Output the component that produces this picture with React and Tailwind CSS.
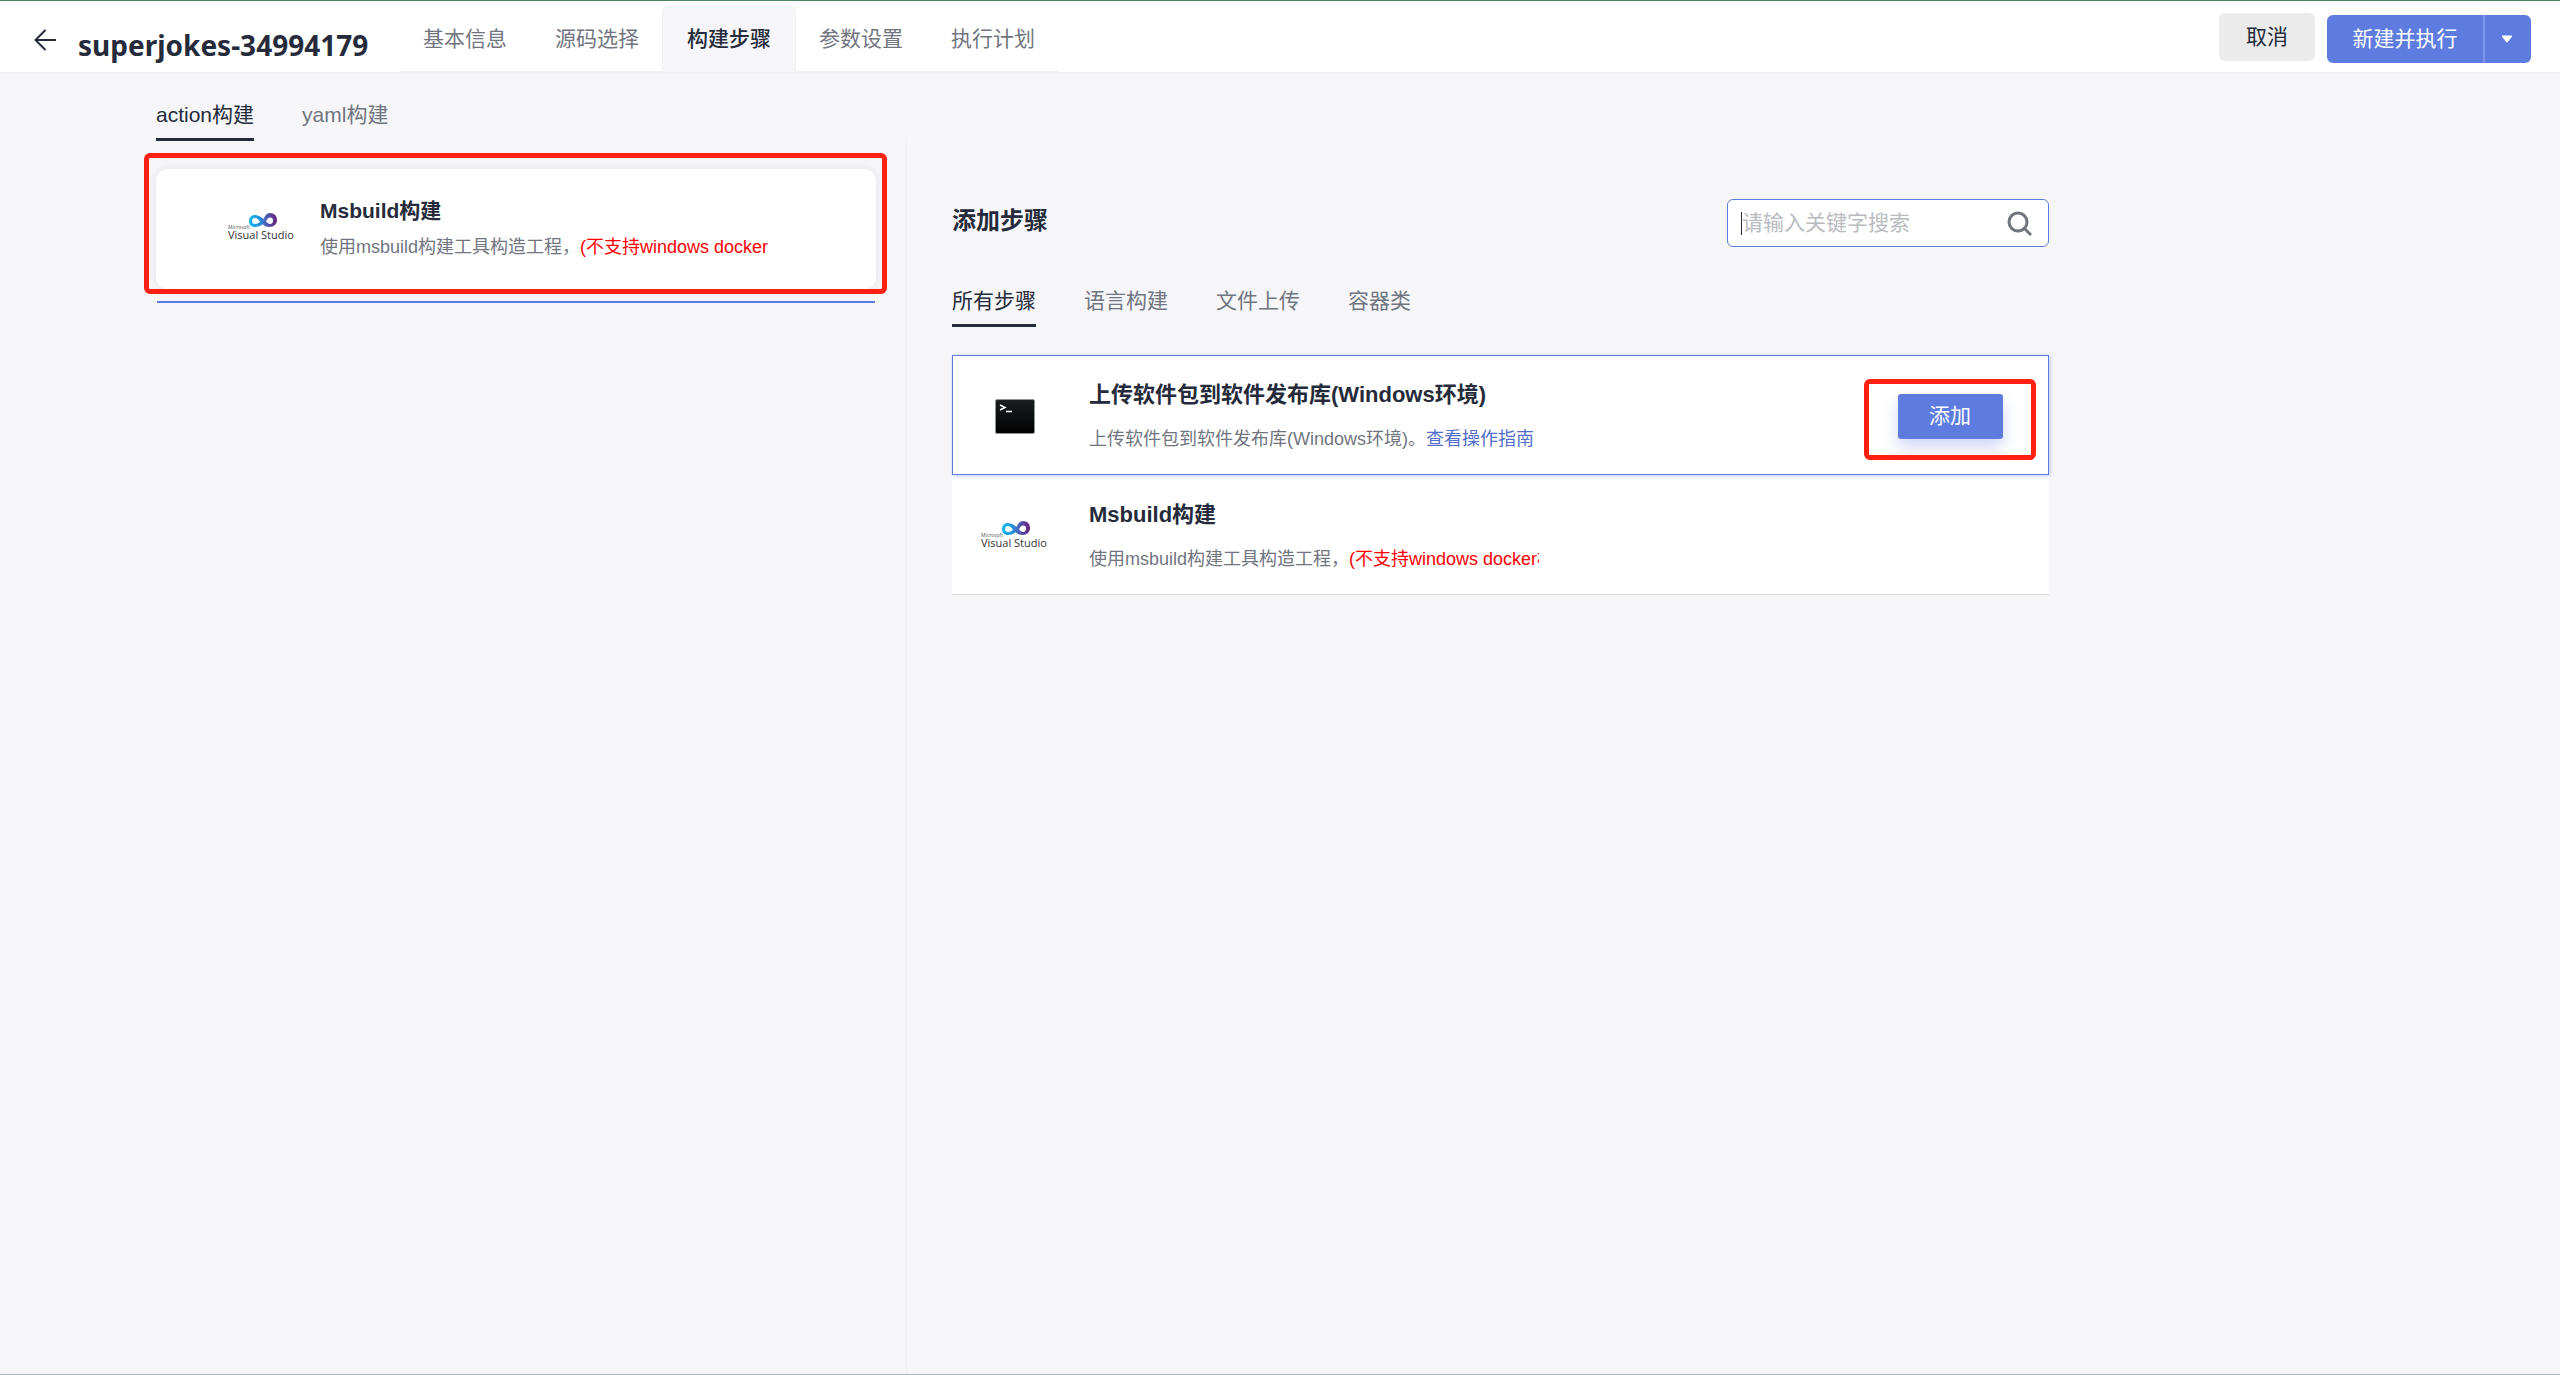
import React, { useState } from 'react';

const NAV = ['基本信息', '源码选择', '构建步骤', '参数设置', '执行计划'];
const MODES = ['action构建', 'yaml构建'];
const CATEGORIES = ['所有步骤', '语言构建', '文件上传', '容器类'];

const VisualStudioLogo = () => (
  <svg width="68" height="30" viewBox="0 0 68 30" className="shrink-0 mb-1" aria-hidden="true">
    <defs>
      <linearGradient id="vs" x1="20" x2="49" y1="0" y2="0" gradientUnits="userSpaceOnUse">
        <stop offset="0" stopColor="#12b9ee" />
        <stop offset="0.35" stopColor="#1f9be0" />
        <stop offset="0.6" stopColor="#4a63bd" />
        <stop offset="1" stopColor="#68217a" />
      </linearGradient>
    </defs>
    <path
      d="M27 3C31 3 33.500 5.500 35.500 7C37 4 38.500 1 42 1C46.500 1 49 4 49 8C49 12 46 15 41.500 15C38 15 36 13.500 34.500 12.200C32.500 14 30 15 27 15C23 15 21 12.500 21 9C21 5.500 23.500 3 27 3ZM27 6C25 6 24 7.300 24 9C24 10.800 25 12 27 12C29.500 12 31 11 32 9.800C30.500 8 29.500 6 27 6ZM38 9.500C39.500 11 40.500 12 42 12C44 12 45 10.500 45 8.500C45 6.800 44 5.500 42.300 5.500C40 5.500 39 7.500 38 9.500Z"
      fill="url(#vs)"
      fillRule="evenodd"
    />
    <text x="0" y="17" fontSize="5" fill="#555" fontFamily="Open Sans, sans-serif">Microsoft</text>
    <text x="0" y="27" fontSize="11" fill="#333" fontFamily="Open Sans, sans-serif">Visual Studio</text>
  </svg>
);

const TerminalIcon = () => (
  <svg width="40" height="36" viewBox="0 0 40 36" className="shrink-0" aria-hidden="true">
    <defs>
      <linearGradient id="term" x1="0" x2="0" y1="0" y2="1">
        <stop offset="0" stopColor="#1b1d1f" />
        <stop offset="1" stopColor="#000" />
      </linearGradient>
    </defs>
    <rect x="0.5" y="0.5" width="39" height="34" rx="1.5" fill="url(#term)" stroke="#8d9593" />
    <path d="M5 6L10 8.500L5 11M11 12.500H17" fill="none" stroke="#fff" strokeWidth="1.5" />
  </svg>
);

const Tabs = ({ items, value, onChange }) => (
  <div className="flex gap-12">
    {items.map((item) => (
      <button
        key={item}
        onClick={() => onChange(item)}
        className={`h-[52px] pt-0.5 border-b-[3px] text-[21px] ${item === value ? 'border-[#252b3a] text-[#252b3a]' : 'border-transparent text-[#71757f]'}`}
      >
        {item}
      </button>
    ))}
  </div>
);

export default function App() {
  const [nav, setNav] = useState('构建步骤');
  const [mode, setMode] = useState('action构建');
  const [category, setCategory] = useState('所有步骤');
  const [keyword, setKeyword] = useState('');

  return (
    <div className="min-h-screen flex flex-col bg-[#f6f6f9] border-t border-t-[#4a8560] border-b border-b-[#a2bcc4] text-[#252b3a] font-['Liberation_Sans','Noto_Sans_CJK_SC',sans-serif]">
      <header className="h-[72px] flex items-start bg-white border-b border-[#f0f0f2] pl-[34px] pr-[29px]">
        <button aria-label="返回" className="mt-7">
          <svg width="23" height="22" viewBox="0 0 23 22" fill="none" stroke="#252b3a" strokeWidth="2">
            <path d="M22 11H1.500M11.500 1L1.500 11L11.500 21" />
          </svg>
        </button>
        <h1 className="ml-[21px] mt-6 w-[321px] text-[28px] leading-10 font-bold font-['Noto_Sans',sans-serif]">superjokes-34994179</h1>

        <nav className="flex mt-[5px]">
          {NAV.map((item) => (
            <button
              key={item}
              onClick={() => setNav(item)}
              className={`h-[66px] text-[21px] rounded-t-md border ${item === nav ? 'w-[134px] -mx-px bg-[#f6f6f9] border-[#f0f0f2] border-b-[#f6f6f9] font-medium' : 'w-[132px] border-transparent border-b-[#f0f0f2] text-[#71757f]'}`}
            >
              {item}
            </button>
          ))}
        </nav>

        <div className="ml-auto flex gap-3">
          <button className="mt-3 w-24 h-12 rounded-md bg-[#ebebeb] text-[21px]">取消</button>
          <div className="mt-[14px] flex h-12 rounded-md overflow-hidden bg-[#5e7ce0] text-white">
            <button className="w-[156px] text-[21px]">新建并执行</button>
            <button aria-label="更多操作" className="w-12 pr-0.5 border-l-2 border-[#7e96e6] flex items-center justify-center">
              <svg width="12" height="8" viewBox="0 0 12 8" fill="#fff">
                <path d="M1.500 0.500H10.500Q11.500 0.500 11 1.500L6.800 7Q6 7.800 5.200 7L1 1.500Q0.500 0.500 1.500 0.500Z" />
              </svg>
            </button>
          </div>
        </div>
      </header>

      <main className="flex-1 flex pt-4">
        <aside className="w-[calc(35%+10px)] pl-36 pr-[19px]">
          <div className="px-3">
            <Tabs items={MODES} value={mode} onChange={setMode} />
          </div>
          <section className="mt-3 h-[141px] border-[5px] border-[#ff2012] rounded-md pt-[11px] pl-[7px] pr-[6px]">
            <div className="h-[120px] flex items-center rounded-xl bg-white shadow-[0_0_9px_rgba(37,43,58,0.08)] pl-[72px]">
              <VisualStudioLogo />
              <div className="ml-6 w-[450px]">
                <h3 className="text-[21px] leading-9 font-bold">Msbuild构建</h3>
                <p className="text-[18px] leading-9 text-[#71757f] whitespace-nowrap">
                  使用msbuild构建工具构造工程，<span className="text-[#ff0000]">(不支持windows docker</span>
                </p>
              </div>
            </div>
          </section>
          <div className="mt-[7px] ml-[13px] mr-3 h-0.5 bg-[#5e7ce0]"></div>
        </aside>

        <section className="flex-1 mt-[50px] border-l border-[#f0f0f2] pt-[60px] pl-[45px] pr-[calc(20%-1px)]">
          <div className="flex items-start justify-between">
            <h2 className="text-2xl leading-[44px] font-bold">添加步骤</h2>
            <label className="w-[322px] h-12 flex items-center rounded-md border border-[#5e7ce0] bg-white pl-[13px] pr-4">
              {!keyword && <span className="w-px h-[23px] bg-[#252b3a]"></span>}
              <input
                aria-label="搜索"
                value={keyword}
                onChange={(e) => setKeyword(e.target.value)}
                placeholder="请输入关键字搜索"
                className="flex-1 min-w-0 text-[21px] outline-none placeholder:text-[#b9bbc0]"
              />
              <svg width="26" height="26" viewBox="0 0 26 26" fill="none" stroke="#71757f" strokeWidth="3">
                <circle cx="12" cy="12" r="9" />
                <path d="M18.500 18.500L25 25" />
              </svg>
            </label>
          </div>

          <div className="mt-7">
            <Tabs items={CATEGORIES} value={category} onChange={setCategory} />
          </div>

          <ul className="mt-7 bg-white">
            <li className="h-[120px] flex items-center border border-[#5e7ce0] shadow-[1px_1px_4px_rgba(94,124,224,0.4)] pt-1 pl-[42px] pr-3">
              <TerminalIcon />
              <div className="ml-[54px] w-[450px]">
                <h3 className="text-[22px] leading-[45px] font-bold whitespace-nowrap">上传软件包到软件发布库(Windows环境)</h3>
                <p className="text-[18px] leading-[45px] text-[#71757f] whitespace-nowrap">
                  上传软件包到软件发布库(Windows环境)。<a href="#guide" className="text-[#526ecc]">查看操作指南</a>
                </p>
              </div>
              <div className="ml-auto mt-1 w-[172px] h-[81px] pb-1.5 border-[5px] border-[#ff2012] rounded-md flex items-center justify-center">
                <button className="w-[105px] h-[45px] rounded-[3px] bg-[#5e7ce0] text-white text-[21px] shadow-[0_8px_15px_rgba(94,124,224,0.3)]">添加</button>
              </div>
            </li>
            <li className="h-[120px] flex items-center border-b border-[#d8dadf] pt-1 pl-[29px]">
              <VisualStudioLogo />
              <div className="ml-10 w-[450px] overflow-hidden">
                <h3 className="text-[22px] leading-[45px] font-bold">Msbuild构建</h3>
                <p className="text-[18px] leading-[45px] text-[#71757f] whitespace-nowrap">
                  使用msbuild构建工具构造工程，<span className="text-[#ff0000]">(不支持windows docker构建)</span>
                </p>
              </div>
            </li>
          </ul>
        </section>
      </main>
    </div>
  );
}
